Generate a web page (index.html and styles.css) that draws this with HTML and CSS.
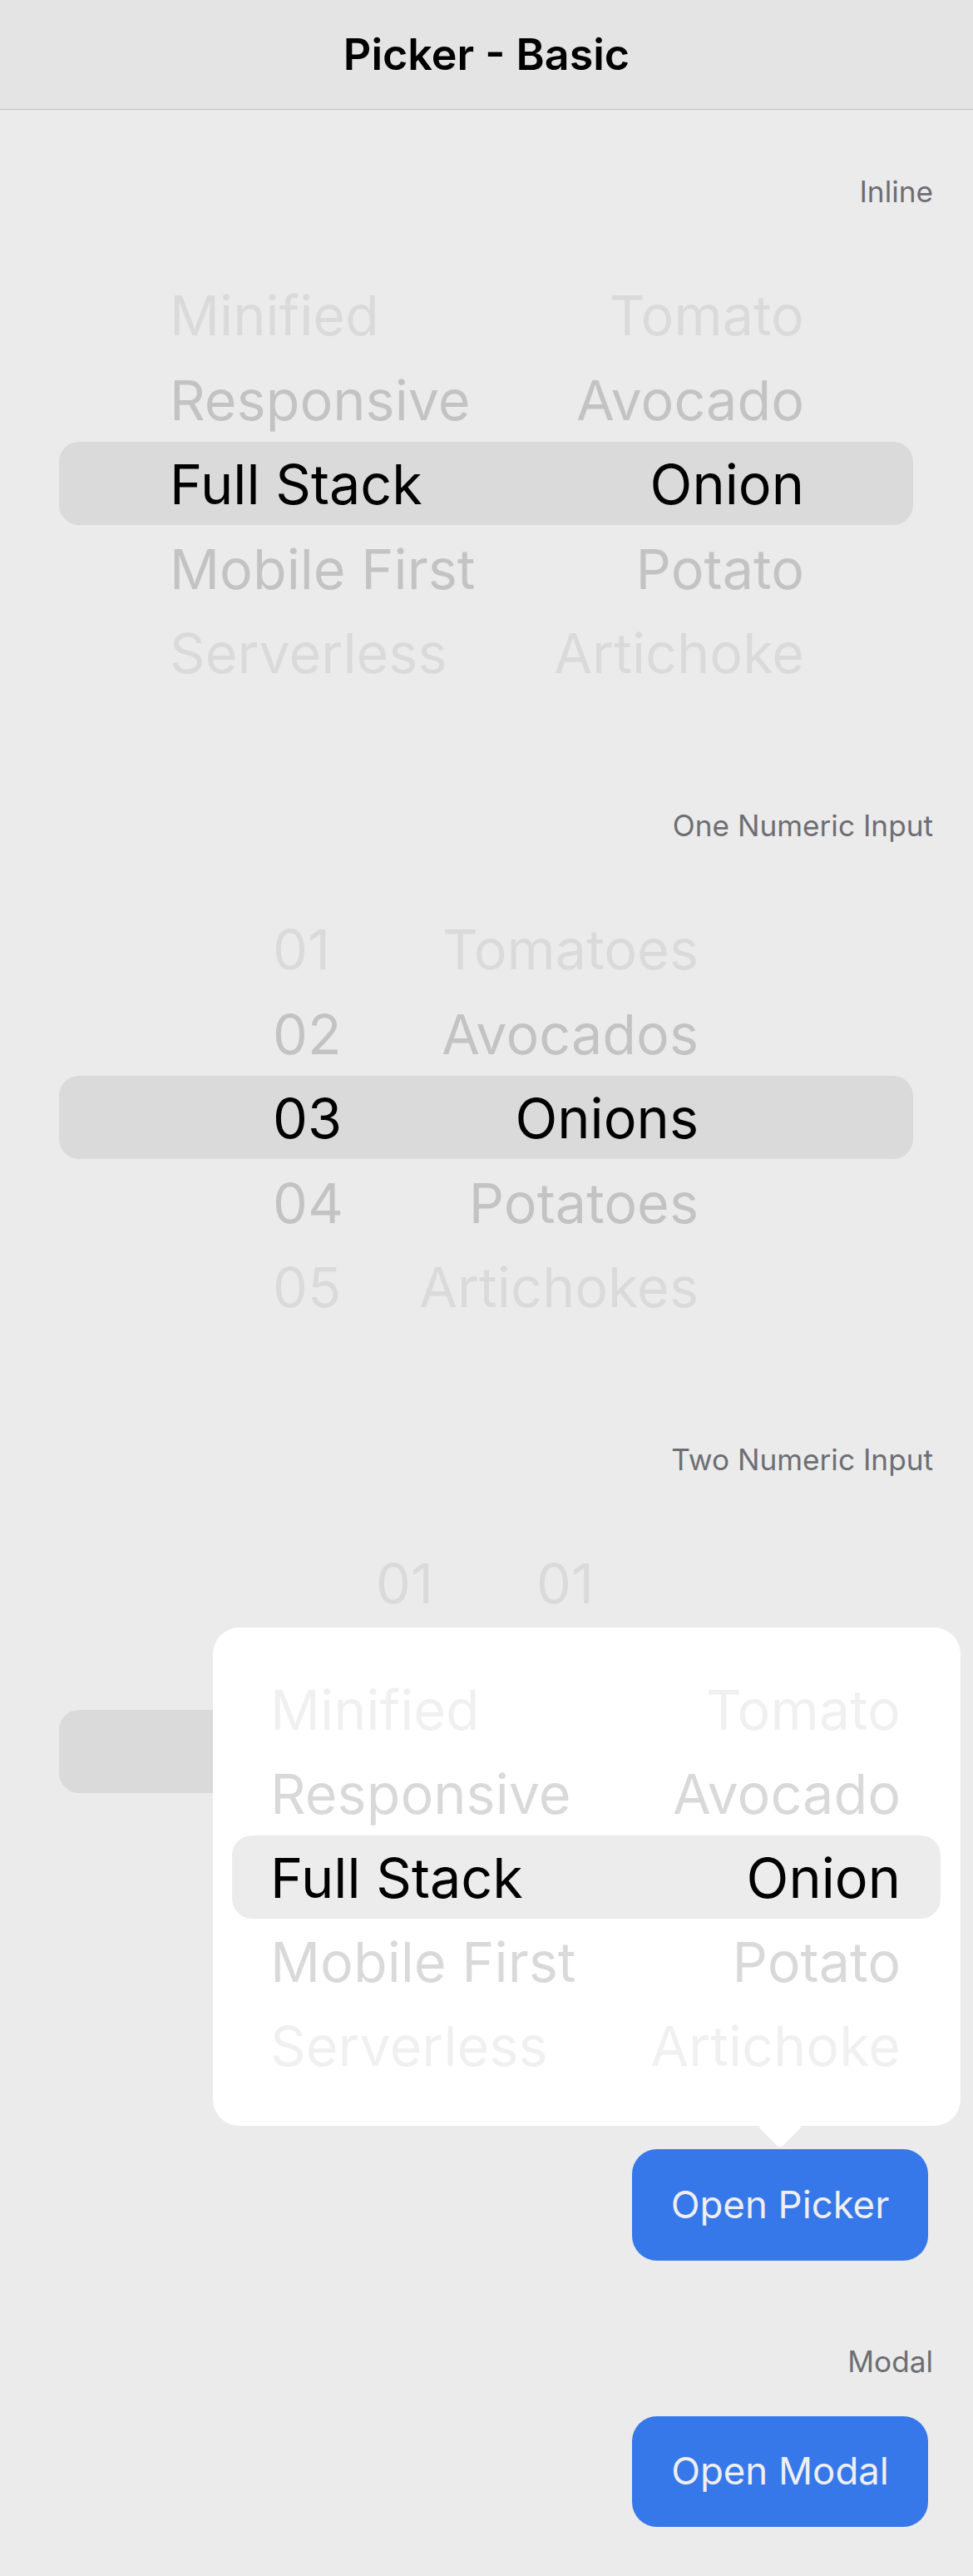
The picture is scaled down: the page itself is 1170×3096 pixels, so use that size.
FILE: index.html
```html
<!DOCTYPE html>
<html lang="en">
<head>
<meta charset="utf-8">
<title>Picker - Basic</title>
<link rel="stylesheet" href="styles.css">
</head>
<body>
<header class="nav">
  <h1 class="nav-title">Picker - Basic</h1>
</header>
<main class="content">
  <section class="section">
    <div class="label">Inline</div>
    <div class="picker picker-words">
      <div class="row fade-2"><span class="cell">Minified</span><span class="cell">Tomato</span></div>
      <div class="row fade-1"><span class="cell">Responsive</span><span class="cell">Avocado</span></div>
      <div class="row selected"><span class="cell">Full Stack</span><span class="cell">Onion</span></div>
      <div class="row fade-1"><span class="cell">Mobile First</span><span class="cell">Potato</span></div>
      <div class="row fade-2"><span class="cell">Serverless</span><span class="cell">Artichoke</span></div>
    </div>
  </section>

  <section class="section">
    <div class="label">One Numeric Input</div>
    <div class="picker picker-numeric">
      <div class="row fade-2"><span class="cell">01</span><span class="cell">Tomatoes</span></div>
      <div class="row fade-1"><span class="cell">02</span><span class="cell">Avocados</span></div>
      <div class="row selected"><span class="cell">03</span><span class="cell">Onions</span></div>
      <div class="row fade-1"><span class="cell">04</span><span class="cell">Potatoes</span></div>
      <div class="row fade-2"><span class="cell">05</span><span class="cell">Artichokes</span></div>
    </div>
  </section>

  <section class="section">
    <div class="label">Two Numeric Input</div>
    <div class="picker picker-double">
      <div class="row fade-2"><span class="cell num">01</span><span class="cell">01</span></div>
      <div class="row fade-1 covered"><span class="cell num">02</span><span class="cell">02</span></div>
      <div class="row selected covered"><span class="cell num">03</span><span class="cell">03</span></div>
      <div class="row fade-1 covered"><span class="cell num">04</span><span class="cell">04</span></div>
      <div class="row fade-2 covered"><span class="cell num">05</span><span class="cell">05</span></div>
    </div>
    <div class="anchor">
      <div class="popover">
        <div class="picker picker-popover">
          <div class="row fade-2"><span class="cell">Minified</span><span class="cell">Tomato</span></div>
          <div class="row fade-1"><span class="cell">Responsive</span><span class="cell">Avocado</span></div>
          <div class="row selected"><span class="cell">Full Stack</span><span class="cell">Onion</span></div>
          <div class="row fade-1"><span class="cell">Mobile First</span><span class="cell">Potato</span></div>
          <div class="row fade-2"><span class="cell">Serverless</span><span class="cell">Artichoke</span></div>
        </div>
      </div>
      <div class="popover-arrow"></div>
      <button class="btn" type="button">Open Picker</button>
    </div>
  </section>

  <section class="section section-modal">
    <div class="label">Modal</div>
    <div class="anchor">
      <button class="btn" type="button">Open Modal</button>
    </div>
  </section>
</main>
</body>
</html>
```

FILE: styles.css
```css
html {
  background: #ebebeb;
}

body {
  margin: 0;
  min-height: 3096px;
  background: #ebebeb;
  font-family: Inter, "Noto Sans", "Liberation Sans", sans-serif;
  color: #000;
}

.nav {
  height: 131px;
  border-bottom: 1px solid #bdbdbd;
  background: #e4e4e4;
  display: flex;
  align-items: center;
  justify-content: center;
}

.nav-title {
  margin: 0;
  font-size: 52px;
  font-weight: 600;
  line-height: 131px;
}

.content {
  display: flex;
  flex-direction: column;
}

.section {
  display: flex;
  flex-direction: column;
  margin-top: 137.5px;
}

.section:first-child {
  margin-top: 78px;
}

.label {
  height: 40px;
  line-height: 40px;
  font-size: 35.2px;
  color: #6d6e73;
  text-align: right;
  padding-right: 48px;
  margin-bottom: 77px;
}

/* picker */
.picker {
  display: flex;
  flex-direction: column;
}

.row {
  height: 101.5px;
  margin: 0 72px 0 71px;
  display: flex;
  align-items: center;
  justify-content: space-between;
  font-size: 66.5px;
  font-weight: 400;
  white-space: nowrap;
}

.cell {
  padding-top: 3px;
  line-height: 80px;
}

.row.selected {
  height: 100px;
  margin-top: 0.75px;
  margin-bottom: 0.75px;
  background: #dadada;
  border-radius: 24px;
  color: #000;
}

.row.fade-1 {
  color: rgba(0, 0, 0, 0.17);
}

.row.fade-2 {
  color: rgba(0, 0, 0, 0.07);
}

.row.covered .cell {
  visibility: hidden;
}

.picker-words .row {
  padding: 0 131px 0 133px;
}

.picker-numeric .row {
  padding: 0 258px 0 257px;
}

.picker-double .row {
  justify-content: flex-start;
  padding: 0 0 0 381px;
}

.picker-double .num {
  width: 193px;
}

/* popover button area */
.anchor {
  position: relative;
  align-self: flex-end;
  width: 356px;
  margin-right: 54px;
  margin-top: 224.5px;
}

.section-modal {
  margin-top: 101px;
}

.section-modal .label {
  margin-bottom: 46px;
}

.section-modal .anchor {
  margin-top: 0;
}

.section-modal .btn {
  height: 133px;
}

.btn {
  display: block;
  width: 356px;
  height: 134px;
  border: 0;
  border-radius: 30px;
  background: #3678e9;
  color: #efefef;
  font-family: Inter, "Noto Sans", "Liberation Sans", sans-serif;
  font-size: 45.5px;
  font-weight: 400;
  padding: 0 0 2px;
}

.popover {
  position: absolute;
  right: -39px;
  bottom: calc(100% + 28px);
  width: 899px;
  height: 599px;
  background: #ffffff;
  border-radius: 32px;
  z-index: 2;
  display: flex;
  flex-direction: column;
  justify-content: center;
}

.popover-arrow {
  position: absolute;
  left: calc(50% - 18px);
  top: -44px;
  width: 36px;
  height: 36px;
  background: #ffffff;
  transform: rotate(45deg);
  border-bottom-right-radius: 5px;
  z-index: 1;
}

.picker-popover .row {
  margin: 0 24px 0 23px;
  padding: 0 48px 0 46px;
}

.picker-popover .row.selected {
  background: #ececec;
}

.picker-popover .row.fade-1 {
  color: rgba(0, 0, 0, 0.15);
}

.picker-popover .row.fade-2 {
  color: rgba(0, 0, 0, 0.06);
}
```
